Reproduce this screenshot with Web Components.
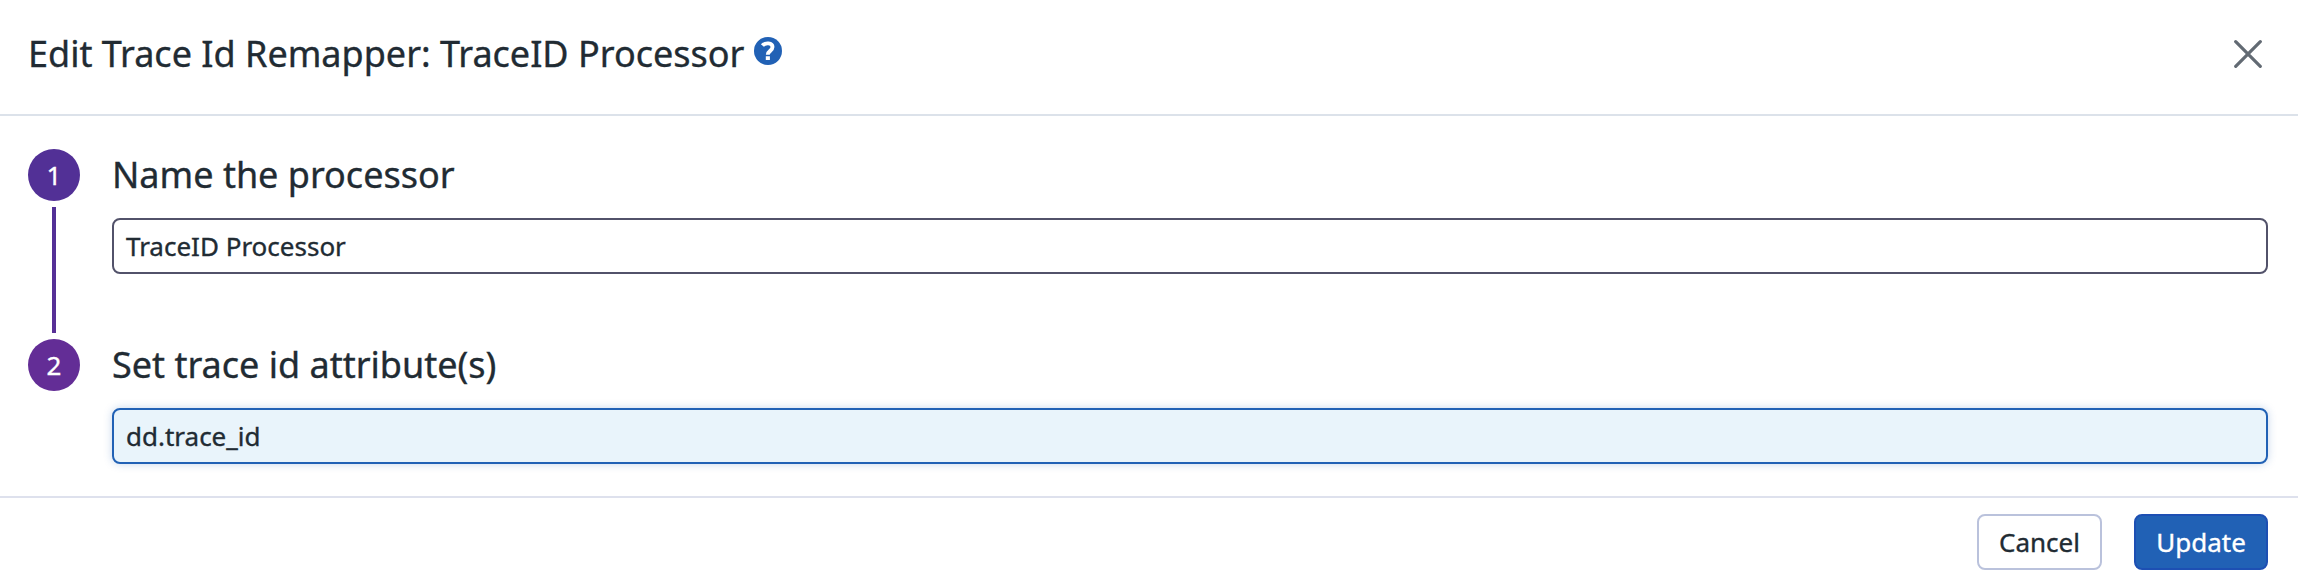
<!DOCTYPE html>
<html lang="en">
<head>
<meta charset="utf-8">
<title>Edit Trace Id Remapper</title>
<style>
body{margin:0;background:#fff;color:#212b33;font-family:"Noto Sans",sans-serif;-webkit-text-stroke:.35px currentColor}
</style>
</head>
<body>
<processor-dialog>
  <dialog-header slot="header">Edit Trace Id Remapper: TraceID Processor</dialog-header>
  <form-step number="1" connected>
    <span slot="title">Name the processor</span>
    <text-field>TraceID Processor</text-field>
  </form-step>
  <form-step number="2" style="--step-color:#632d96">
    <span slot="title">Set trace id attribute(s)</span>
    <text-field focused>dd.trace_id</text-field>
  </form-step>
  <action-button slot="actions" style="width:125px">Cancel</action-button>
  <action-button slot="actions" primary style="width:134px">Update</action-button>
</processor-dialog>
<script>
function define(name, html, setup) {
  const template = document.createElement('template');
  template.innerHTML = html;
  customElements.define(name, class extends HTMLElement {
    constructor() {
      super();
      this.attachShadow({ mode: 'open' }).append(template.content.cloneNode(true));
    }
    connectedCallback() { if (setup) setup(this); }
  });
}

define('processor-dialog', `
<style>
:host{display:flex;flex-direction:column;height:586px;box-sizing:border-box}
main{height:380px;padding:33px 30px 0 28px;box-sizing:border-box}
footer{flex:1;border-top:2px solid #dee1ed;display:flex;justify-content:flex-end;align-items:flex-start;gap:32px;padding:16px 30px 0}
</style>
<slot name="header"></slot>
<main><slot></slot></main>
<footer><slot name="actions"></slot></footer>`);

define('dialog-header', `
<style>
:host{display:flex;height:116px;box-sizing:border-box;padding:28px 36px 0 28px;border-bottom:2px solid #dce2ea;align-items:flex-start;font-size:36px;line-height:52px}
h1{margin:0;font:inherit;white-space:nowrap}
svg{display:block;flex:none}
.help{margin:9px 0 0 10px}
.close{margin:12px 0 0 auto}
</style>
<h1><slot></slot></h1>
<svg class="help" width="28" height="28" viewBox="0 0 28 28"><circle cx="14" cy="14" r="14" fill="#2161b5"/><path d="M8.4 8.6C11 5.4 18.5 5.4 18.5 10.1c0 4-4.7 3.6-4.7 7.7" fill="none" stroke="#fff" stroke-width="3.9"/><path d="M11.8 19.2h4.1v3.8h-4.1z" fill="#fff"/></svg>
<svg class="close" width="28" height="28" viewBox="0 0 28 28"><path d="M1.7 1.7l24.6 24.6M26.3 1.7L1.7 26.3" fill="none" stroke="#626a73" stroke-width="3.2" stroke-linecap="round"/></svg>`);

define('form-step', `
<style>
:host{display:grid;grid-template-columns:52px 1fr;column-gap:32px;height:190px}
.rail{display:flex;flex-direction:column;align-items:center;gap:6px}
.badge{width:52px;height:52px;border-radius:50%;background:var(--step-color,#523096);color:#fff;font-size:26px;line-height:52px;text-align:center}
.line{display:none;width:4px;height:126px;background:linear-gradient(#523096,#582f96)}
:host([connected]) .line{display:block}
h2{margin:0 0 17px;font-size:36px;font-weight:400;line-height:52px;white-space:nowrap}
</style>
<div class="rail"><div class="badge"></div><div class="line"></div></div>
<div><h2><slot name="title"></slot></h2><slot></slot></div>`,
el => { el.shadowRoot.querySelector('.badge').textContent = el.getAttribute('number'); });

define('text-field', `
<style>
:host{display:block;height:56px;box-sizing:border-box;border:2px solid #52526a;border-radius:8px;padding:0 12px;font-size:26px;line-height:52px;background:#fff;white-space:nowrap}
:host([focused]){border-color:#2161b5;background:#e9f4fb;box-shadow:0 0 8px rgba(33,97,181,.25)}
</style>
<slot></slot>`);

define('action-button', `
<style>
:host{display:block;height:56px;box-sizing:border-box;border:2px solid #bac2dc;border-radius:8px;text-align:center;font-size:26px;line-height:52px;background:#fff}
:host([primary]){border-color:#1d4fb3;background:#2161b5;color:#fff}
</style>
<slot></slot>`);
</script>
</body>
</html>
